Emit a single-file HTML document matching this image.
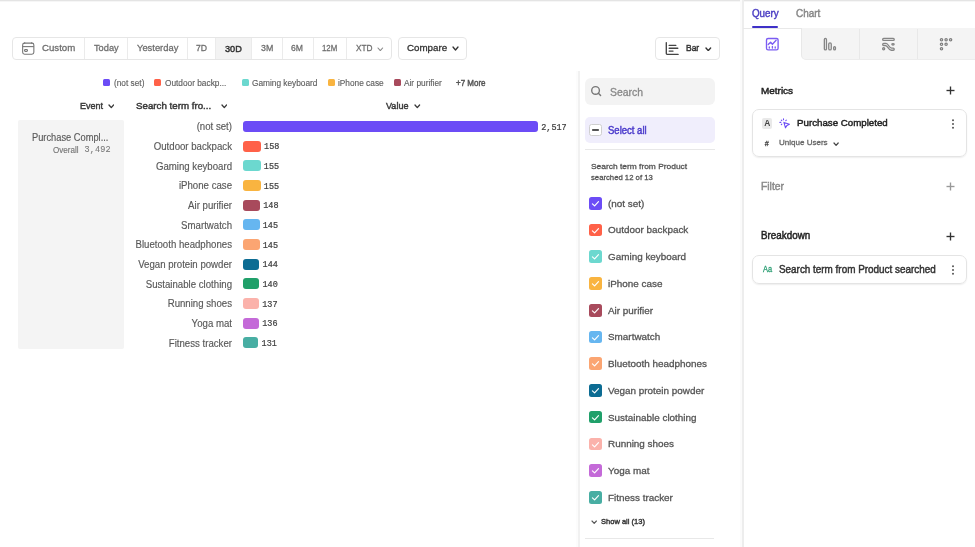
<!DOCTYPE html>
<html><head><meta charset="utf-8">
<style>
*{box-sizing:border-box;margin:0;padding:0}
html,body{width:975px;height:547px;overflow:hidden;background:#fff;font-family:"Liberation Sans",sans-serif;-webkit-font-smoothing:antialiased}
.wrap{position:absolute;left:0;top:0;width:975px;height:547px;will-change:transform}
.a{position:absolute;white-space:nowrap}
.m{-webkit-text-stroke:0.3px currentColor}
.m2{-webkit-text-stroke:0.45px currentColor}
.ms{-webkit-text-stroke:0.15px currentColor}
.mono{font-family:"Liberation Mono",monospace;position:absolute;white-space:nowrap}
</style></head><body>
<div class="wrap">
<div class="a" style="left:0px;top:0px;width:975px;height:1px;background:#e4e4e4"></div>
<div class="a" style="left:0px;top:1px;width:975px;height:1px;background:#f6f6f6"></div>
<div class="a" style="left:12px;top:37px;width:380px;height:23px;border:1px solid #e6e6e6;border-radius:4px"></div>
<div class="a" style="left:216px;top:38px;width:35px;height:21px;background:#f3f3f3"></div>
<div class="a" style="left:84px;top:38px;width:1px;height:21px;background:#ebebeb"></div>
<div class="a" style="left:127px;top:38px;width:1px;height:21px;background:#ebebeb"></div>
<div class="a" style="left:187px;top:38px;width:1px;height:21px;background:#ebebeb"></div>
<div class="a" style="left:215px;top:38px;width:1px;height:21px;background:#ebebeb"></div>
<div class="a" style="left:251px;top:38px;width:1px;height:21px;background:#ebebeb"></div>
<div class="a" style="left:282px;top:38px;width:1px;height:21px;background:#ebebeb"></div>
<div class="a" style="left:313px;top:38px;width:1px;height:21px;background:#ebebeb"></div>
<div class="a" style="left:346px;top:38px;width:1px;height:21px;background:#ebebeb"></div>
<svg class="a" style="left:21px;top:41px;" width="15" height="15" viewBox="0 0 15 15"><g fill="none" stroke="#777" stroke-width="1.1"><rect x="1.65" y="2.15" width="11.2" height="11.1" rx="1.9"/><line x1="1.65" y1="5.6" x2="12.85" y2="5.6"/><rect x="3.5" y="8.65" width="3" height="1.8" rx="0.9"/></g><g fill="#777"><circle cx="3.6" cy="2.1" r="0.75"/><circle cx="10.7" cy="2.1" r="0.75"/></g></svg>
<div class="a m" style="left:41.90px;top:42.38px;font-size:9.9px;line-height:12.38px;color:#6e6e6e;transform:scaleX(0.9765);transform-origin:0 0;">Custom</div>
<div class="a m" style="left:93.80px;top:42.38px;font-size:9.9px;line-height:12.38px;color:#6e6e6e;transform:scaleX(0.9356);transform-origin:0 0;">Today</div>
<div class="a m" style="left:136.60px;top:42.38px;font-size:9.9px;line-height:12.38px;color:#6e6e6e;transform:scaleX(0.9485);transform-origin:0 0;">Yesterday</div>
<div class="a m" style="left:195.70px;top:42.38px;font-size:9.9px;line-height:12.38px;color:#6e6e6e;transform:scaleX(0.8775);transform-origin:0 0;">7D</div>
<div class="a m2" style="left:225.00px;top:42.88px;font-size:9.8px;line-height:12.25px;color:#333;transform:scaleX(0.9333);transform-origin:0 0;">30D</div>
<div class="a m" style="left:260.70px;top:42.38px;font-size:9.9px;line-height:12.38px;color:#6e6e6e;transform:scaleX(0.8945);transform-origin:0 0;">3M</div>
<div class="a m" style="left:291.00px;top:42.38px;font-size:9.9px;line-height:12.38px;color:#6e6e6e;transform:scaleX(0.8727);transform-origin:0 0;">6M</div>
<div class="a m" style="left:321.70px;top:42.38px;font-size:9.9px;line-height:12.38px;color:#6e6e6e;transform:scaleX(0.7948);transform-origin:0 0;">12M</div>
<div class="a m" style="left:355.70px;top:42.38px;font-size:9.9px;line-height:12.38px;color:#6e6e6e;transform:scaleX(0.8384);transform-origin:0 0;">XTD</div>
<svg class="a" style="left:377.2px;top:46.8px;" width="6.6" height="4.6" viewBox="0 0 6.6 4.6"><path d="M1 1 L3.3 3.6 L5.6 1" fill="none" stroke="#888" stroke-width="1.1" stroke-linecap="round" stroke-linejoin="round"/></svg>
<div class="a" style="left:398px;top:37px;width:69px;height:23px;border:1px solid #e6e6e6;border-radius:4px"></div>
<div class="a m" style="left:407.00px;top:42.48px;font-size:9.7px;line-height:12.12px;color:#333;transform:scaleX(1.0075);transform-origin:0 0;">Compare</div>
<svg class="a" style="left:452px;top:46.4px;" width="7" height="5" viewBox="0 0 7 5"><path d="M1 1 L3.5 4 L6 1" fill="none" stroke="#333" stroke-width="1.3" stroke-linecap="round" stroke-linejoin="round"/></svg>
<div class="a" style="left:655px;top:37px;width:65px;height:23px;border:1px solid #e6e6e6;border-radius:4px"></div>
<svg class="a" style="left:664px;top:41px;" width="16" height="16" viewBox="0 0 16 16"><g fill="none" stroke="#444" stroke-width="1.35" stroke-linecap="round"><path d="M2.3 1.6 V12.6 Q2.3 13.4 3.1 13.4 H14.1"/><line x1="5.2" y1="4.4" x2="11.8" y2="4.4"/><line x1="5.2" y1="7.2" x2="13.8" y2="7.2"/><line x1="5.2" y1="10.1" x2="9" y2="10.1"/></g></svg>
<div class="a m2" style="left:685.80px;top:42.08px;font-size:9.8px;line-height:12.25px;color:#333;transform:scaleX(0.8656);transform-origin:0 0;">Bar</div>
<svg class="a" style="left:705px;top:46.8px;" width="6.6" height="4.6" viewBox="0 0 6.6 4.6"><path d="M1 1 L3.3 3.6 L5.6 1" fill="none" stroke="#333" stroke-width="1.4" stroke-linecap="round" stroke-linejoin="round"/></svg>
<div class="a" style="left:103px;top:79px;width:7px;height:7px;background:#6c4cf6;border-radius:1.5px"></div>
<div class="a ms" style="left:113.80px;top:77.86px;font-size:8.9px;line-height:11.12px;color:#606060;transform:scaleX(0.9342);transform-origin:0 0;">(not set)</div>
<div class="a" style="left:154px;top:79px;width:7px;height:7px;background:#ff6148;border-radius:1.5px"></div>
<div class="a ms" style="left:164.80px;top:77.86px;font-size:8.9px;line-height:11.12px;color:#606060;transform:scaleX(0.9342);transform-origin:0 0;">Outdoor backp...</div>
<div class="a" style="left:242px;top:79px;width:7px;height:7px;background:#6cd8cf;border-radius:1.5px"></div>
<div class="a ms" style="left:252.20px;top:77.86px;font-size:8.9px;line-height:11.12px;color:#606060;transform:scaleX(0.9342);transform-origin:0 0;">Gaming keyboard</div>
<div class="a" style="left:328px;top:79px;width:7px;height:7px;background:#f9b440;border-radius:1.5px"></div>
<div class="a ms" style="left:337.80px;top:77.86px;font-size:8.9px;line-height:11.12px;color:#606060;transform:scaleX(0.9342);transform-origin:0 0;">iPhone case</div>
<div class="a" style="left:394px;top:79px;width:7px;height:7px;background:#a84a5c;border-radius:1.5px"></div>
<div class="a ms" style="left:404.00px;top:77.86px;font-size:8.9px;line-height:11.12px;color:#606060;transform:scaleX(0.9342);transform-origin:0 0;">Air purifier</div>
<div class="a m2" style="left:456.30px;top:78.05px;font-size:8.7px;line-height:10.88px;color:#555;transform:scaleX(0.9207);transform-origin:0 0;">+7 More</div>
<div class="a m2" style="left:79.60px;top:99.88px;font-size:9.8px;line-height:12.25px;color:#383838;transform:scaleX(0.9182);transform-origin:0 0;">Event</div>
<svg class="a" style="left:107.9px;top:104.4px;" width="6.6" height="4.6" viewBox="0 0 6.6 4.6"><path d="M1 1 L3.3 3.6 L5.6 1" fill="none" stroke="#383838" stroke-width="1.3" stroke-linecap="round" stroke-linejoin="round"/></svg>
<div class="a m2" style="left:135.90px;top:99.88px;font-size:9.8px;line-height:12.25px;color:#383838;transform:scaleX(0.9934);transform-origin:0 0;">Search term fro...</div>
<svg class="a" style="left:220.5px;top:104.4px;" width="6.6" height="4.6" viewBox="0 0 6.6 4.6"><path d="M1 1 L3.3 3.6 L5.6 1" fill="none" stroke="#383838" stroke-width="1.3" stroke-linecap="round" stroke-linejoin="round"/></svg>
<div class="a m2" style="left:386.20px;top:99.88px;font-size:9.8px;line-height:12.25px;color:#383838;transform:scaleX(0.9240);transform-origin:0 0;">Value</div>
<svg class="a" style="left:414px;top:104.4px;" width="6.6" height="4.6" viewBox="0 0 6.6 4.6"><path d="M1 1 L3.3 3.6 L5.6 1" fill="none" stroke="#383838" stroke-width="1.3" stroke-linecap="round" stroke-linejoin="round"/></svg>
<div class="a" style="left:18px;top:119.5px;width:105.8px;height:229.9px;background:#f4f4f4;border-radius:2px"></div>
<div class="a ms" style="left:32.00px;top:131.59px;font-size:10px;line-height:12.5px;color:#5a5a5a;transform:scaleX(0.9289);transform-origin:0 0;">Purchase Compl...</div>
<div class="a ms" style="left:53.20px;top:145.83px;font-size:8.2px;line-height:10.25px;color:#777;transform:scaleX(0.9865);transform-origin:0 0;">Overall</div>
<div class="a mono" style="left:84.6px;top:146.3px;font-size:8.5px;line-height:9px;letter-spacing:0.15px;color:#7a7a7a;-webkit-text-stroke:0.1px #7a7a7a">3,492</div>
<div class="a ms" style="left:-168.12px;width:400px;text-align:right;top:121.48px;font-size:10px;line-height:12.5px;color:#585858;transform:scaleX(0.9640);transform-origin:100% 0;">(not set)</div>
<div class="a" style="left:243px;top:121.0px;width:295px;height:11px;background:#6c4cf6;border-radius:3px"></div>
<div class="a mono" style="left:541.20px;top:122.70px;font-size:8.5px;line-height:10px;color:#404040;-webkit-text-stroke:0.2px #404040">2,517</div>
<div class="a ms" style="left:-168.12px;width:400px;text-align:right;top:141.14px;font-size:10px;line-height:12.5px;color:#585858;transform:scaleX(0.9640);transform-origin:100% 0;">Outdoor backpack</div>
<div class="a" style="left:243px;top:140.66px;width:17.9px;height:11px;background:#ff6148;border-radius:3px"></div>
<div class="a mono" style="left:264.10px;top:142.36px;font-size:8.5px;line-height:10px;color:#404040;-webkit-text-stroke:0.2px #404040">158</div>
<div class="a ms" style="left:-168.12px;width:400px;text-align:right;top:160.80px;font-size:10px;line-height:12.5px;color:#585858;transform:scaleX(0.9640);transform-origin:100% 0;">Gaming keyboard</div>
<div class="a" style="left:243px;top:160.32px;width:17.6px;height:11px;background:#6cd8cf;border-radius:3px"></div>
<div class="a mono" style="left:263.80px;top:162.02px;font-size:8.5px;line-height:10px;color:#404040;-webkit-text-stroke:0.2px #404040">155</div>
<div class="a ms" style="left:-168.12px;width:400px;text-align:right;top:180.47px;font-size:10px;line-height:12.5px;color:#585858;transform:scaleX(0.9640);transform-origin:100% 0;">iPhone case</div>
<div class="a" style="left:243px;top:179.98px;width:17.6px;height:11px;background:#f9b440;border-radius:3px"></div>
<div class="a mono" style="left:263.80px;top:181.68px;font-size:8.5px;line-height:10px;color:#404040;-webkit-text-stroke:0.2px #404040">155</div>
<div class="a ms" style="left:-168.12px;width:400px;text-align:right;top:200.12px;font-size:10px;line-height:12.5px;color:#585858;transform:scaleX(0.9640);transform-origin:100% 0;">Air purifier</div>
<div class="a" style="left:243px;top:199.64px;width:17px;height:11px;background:#a84a5c;border-radius:3px"></div>
<div class="a mono" style="left:263.20px;top:201.34px;font-size:8.5px;line-height:10px;color:#404040;-webkit-text-stroke:0.2px #404040">148</div>
<div class="a ms" style="left:-168.12px;width:400px;text-align:right;top:219.78px;font-size:10px;line-height:12.5px;color:#585858;transform:scaleX(0.9640);transform-origin:100% 0;">Smartwatch</div>
<div class="a" style="left:243px;top:219.3px;width:16.5px;height:11px;background:#66b6f0;border-radius:3px"></div>
<div class="a mono" style="left:262.70px;top:221.00px;font-size:8.5px;line-height:10px;color:#404040;-webkit-text-stroke:0.2px #404040">145</div>
<div class="a ms" style="left:-168.12px;width:400px;text-align:right;top:239.44px;font-size:10px;line-height:12.5px;color:#585858;transform:scaleX(0.9640);transform-origin:100% 0;">Bluetooth headphones</div>
<div class="a" style="left:243px;top:238.96px;width:16.5px;height:11px;background:#fba572;border-radius:3px"></div>
<div class="a mono" style="left:262.70px;top:240.66px;font-size:8.5px;line-height:10px;color:#404040;-webkit-text-stroke:0.2px #404040">145</div>
<div class="a ms" style="left:-168.12px;width:400px;text-align:right;top:259.11px;font-size:10px;line-height:12.5px;color:#585858;transform:scaleX(0.9640);transform-origin:100% 0;">Vegan protein powder</div>
<div class="a" style="left:243px;top:258.62px;width:16.4px;height:11px;background:#0c6c93;border-radius:3px"></div>
<div class="a mono" style="left:262.60px;top:260.32px;font-size:8.5px;line-height:10px;color:#404040;-webkit-text-stroke:0.2px #404040">144</div>
<div class="a ms" style="left:-168.12px;width:400px;text-align:right;top:278.76px;font-size:10px;line-height:12.5px;color:#585858;transform:scaleX(0.9640);transform-origin:100% 0;">Sustainable clothing</div>
<div class="a" style="left:243px;top:278.28px;width:16.3px;height:11px;background:#20a06a;border-radius:3px"></div>
<div class="a mono" style="left:262.50px;top:279.98px;font-size:8.5px;line-height:10px;color:#404040;-webkit-text-stroke:0.2px #404040">140</div>
<div class="a ms" style="left:-168.12px;width:400px;text-align:right;top:298.43px;font-size:10px;line-height:12.5px;color:#585858;transform:scaleX(0.9640);transform-origin:100% 0;">Running shoes</div>
<div class="a" style="left:243px;top:297.94px;width:16px;height:11px;background:#fbb2ab;border-radius:3px"></div>
<div class="a mono" style="left:262.20px;top:299.64px;font-size:8.5px;line-height:10px;color:#404040;-webkit-text-stroke:0.2px #404040">137</div>
<div class="a ms" style="left:-168.12px;width:400px;text-align:right;top:318.09px;font-size:10px;line-height:12.5px;color:#585858;transform:scaleX(0.9640);transform-origin:100% 0;">Yoga mat</div>
<div class="a" style="left:243px;top:317.6px;width:16px;height:11px;background:#c46ad8;border-radius:3px"></div>
<div class="a mono" style="left:262.20px;top:319.30px;font-size:8.5px;line-height:10px;color:#404040;-webkit-text-stroke:0.2px #404040">136</div>
<div class="a ms" style="left:-168.12px;width:400px;text-align:right;top:337.75px;font-size:10px;line-height:12.5px;color:#585858;transform:scaleX(0.9640);transform-origin:100% 0;">Fitness tracker</div>
<div class="a" style="left:243px;top:337.26px;width:15.4px;height:11px;background:#48aea3;border-radius:3px"></div>
<div class="a mono" style="left:261.60px;top:338.96px;font-size:8.5px;line-height:10px;color:#404040;-webkit-text-stroke:0.2px #404040">131</div>
<div class="a" style="left:576px;top:71px;width:2px;height:476px;background:#fcfcfc"></div>
<div class="a" style="left:578px;top:71px;width:2px;height:476px;background:#f1f1f1"></div>
<div class="a" style="left:585px;top:77.6px;width:129.5px;height:27.8px;background:#f3f3f3;border-radius:6px"></div>
<svg class="a" style="left:589px;top:85px;" width="14" height="14" viewBox="0 0 14 14"><g fill="none" stroke="#777" stroke-width="1.4" stroke-linecap="round"><circle cx="6.55" cy="5.45" r="3.85"/><line x1="9.4" y1="8.3" x2="11.6" y2="10.6"/></g></svg>
<div class="a m" style="left:609.90px;top:85.50px;font-size:10.5px;line-height:13.12px;color:#888;transform:scaleX(0.9925);transform-origin:0 0;">Search</div>
<div class="a" style="left:585px;top:116.9px;width:129.5px;height:26px;background:#f0eefc;border-radius:5px"></div>
<div class="a" style="left:589.3px;top:123.8px;width:12.5px;height:12.7px;background:#fff;border:1px solid #cfcfcf;border-radius:2.5px"></div>
<div class="a" style="left:592.3px;top:129.4px;width:6.8px;height:1.6px;background:#555;border-radius:0.8px"></div>
<div class="a m2" style="left:607.70px;top:124.99px;font-size:10.2px;line-height:12.75px;color:#4b3bcb;transform:scaleX(0.9348);transform-origin:0 0;">Select all</div>
<div class="a" style="left:585px;top:149px;width:129.5px;height:1px;background:#e8e8e8"></div>
<div class="a m" style="left:590.90px;top:162.43px;font-size:8.1px;line-height:10.12px;color:#555;transform:scaleX(1.0372);transform-origin:0 0;">Search term from Product</div>
<div class="a m" style="left:590.90px;top:173.13px;font-size:8.1px;line-height:10.12px;color:#555;transform:scaleX(0.9530);transform-origin:0 0;">searched 12 of 13</div>
<div class="a" style="left:589px;top:197.0px;width:13px;height:12.6px;background:#6c4cf6;border-radius:2.5px"></div>
<svg class="a" style="left:589px;top:197.0px;" width="13" height="13" viewBox="0 0 13 13"><path d="M3.4 6.8 L5.6 8.9 L9.5 4.6" fill="none" stroke="#fff" stroke-width="1.15" stroke-linecap="round" stroke-linejoin="round"/></svg>
<div class="a m" style="left:607.60px;top:197.68px;font-size:9.8px;line-height:12.25px;color:#555;transform:scaleX(1.0101);transform-origin:0 0;">(not set)</div>
<div class="a" style="left:589px;top:223.73px;width:13px;height:12.6px;background:#ff6148;border-radius:2.5px"></div>
<svg class="a" style="left:589px;top:223.73px;" width="13" height="13" viewBox="0 0 13 13"><path d="M3.4 6.8 L5.6 8.9 L9.5 4.6" fill="none" stroke="#fff" stroke-width="1.15" stroke-linecap="round" stroke-linejoin="round"/></svg>
<div class="a m" style="left:607.60px;top:224.41px;font-size:9.8px;line-height:12.25px;color:#555;transform:scaleX(1.0101);transform-origin:0 0;">Outdoor backpack</div>
<div class="a" style="left:589px;top:250.46px;width:13px;height:12.6px;background:#6cd8cf;border-radius:2.5px"></div>
<svg class="a" style="left:589px;top:250.46px;" width="13" height="13" viewBox="0 0 13 13"><path d="M3.4 6.8 L5.6 8.9 L9.5 4.6" fill="none" stroke="#fff" stroke-width="1.15" stroke-linecap="round" stroke-linejoin="round"/></svg>
<div class="a m" style="left:607.60px;top:251.14px;font-size:9.8px;line-height:12.25px;color:#555;transform:scaleX(1.0101);transform-origin:0 0;">Gaming keyboard</div>
<div class="a" style="left:589px;top:277.19px;width:13px;height:12.6px;background:#f9b440;border-radius:2.5px"></div>
<svg class="a" style="left:589px;top:277.19px;" width="13" height="13" viewBox="0 0 13 13"><path d="M3.4 6.8 L5.6 8.9 L9.5 4.6" fill="none" stroke="#fff" stroke-width="1.15" stroke-linecap="round" stroke-linejoin="round"/></svg>
<div class="a m" style="left:607.60px;top:277.87px;font-size:9.8px;line-height:12.25px;color:#555;transform:scaleX(1.0101);transform-origin:0 0;">iPhone case</div>
<div class="a" style="left:589px;top:303.92px;width:13px;height:12.6px;background:#a84a5c;border-radius:2.5px"></div>
<svg class="a" style="left:589px;top:303.92px;" width="13" height="13" viewBox="0 0 13 13"><path d="M3.4 6.8 L5.6 8.9 L9.5 4.6" fill="none" stroke="#fff" stroke-width="1.15" stroke-linecap="round" stroke-linejoin="round"/></svg>
<div class="a m" style="left:607.60px;top:304.60px;font-size:9.8px;line-height:12.25px;color:#555;transform:scaleX(1.0101);transform-origin:0 0;">Air purifier</div>
<div class="a" style="left:589px;top:330.65px;width:13px;height:12.6px;background:#66b6f0;border-radius:2.5px"></div>
<svg class="a" style="left:589px;top:330.65px;" width="13" height="13" viewBox="0 0 13 13"><path d="M3.4 6.8 L5.6 8.9 L9.5 4.6" fill="none" stroke="#fff" stroke-width="1.15" stroke-linecap="round" stroke-linejoin="round"/></svg>
<div class="a m" style="left:607.60px;top:331.33px;font-size:9.8px;line-height:12.25px;color:#555;transform:scaleX(1.0101);transform-origin:0 0;">Smartwatch</div>
<div class="a" style="left:589px;top:357.38px;width:13px;height:12.6px;background:#fba572;border-radius:2.5px"></div>
<svg class="a" style="left:589px;top:357.38px;" width="13" height="13" viewBox="0 0 13 13"><path d="M3.4 6.8 L5.6 8.9 L9.5 4.6" fill="none" stroke="#fff" stroke-width="1.15" stroke-linecap="round" stroke-linejoin="round"/></svg>
<div class="a m" style="left:607.60px;top:358.06px;font-size:9.8px;line-height:12.25px;color:#555;transform:scaleX(1.0101);transform-origin:0 0;">Bluetooth headphones</div>
<div class="a" style="left:589px;top:384.11px;width:13px;height:12.6px;background:#0c6c93;border-radius:2.5px"></div>
<svg class="a" style="left:589px;top:384.11px;" width="13" height="13" viewBox="0 0 13 13"><path d="M3.4 6.8 L5.6 8.9 L9.5 4.6" fill="none" stroke="#fff" stroke-width="1.15" stroke-linecap="round" stroke-linejoin="round"/></svg>
<div class="a m" style="left:607.60px;top:384.79px;font-size:9.8px;line-height:12.25px;color:#555;transform:scaleX(1.0101);transform-origin:0 0;">Vegan protein powder</div>
<div class="a" style="left:589px;top:410.84px;width:13px;height:12.6px;background:#20a06a;border-radius:2.5px"></div>
<svg class="a" style="left:589px;top:410.84px;" width="13" height="13" viewBox="0 0 13 13"><path d="M3.4 6.8 L5.6 8.9 L9.5 4.6" fill="none" stroke="#fff" stroke-width="1.15" stroke-linecap="round" stroke-linejoin="round"/></svg>
<div class="a m" style="left:607.60px;top:411.52px;font-size:9.8px;line-height:12.25px;color:#555;transform:scaleX(1.0101);transform-origin:0 0;">Sustainable clothing</div>
<div class="a" style="left:589px;top:437.57px;width:13px;height:12.6px;background:#fbb2ab;border-radius:2.5px"></div>
<svg class="a" style="left:589px;top:437.57px;" width="13" height="13" viewBox="0 0 13 13"><path d="M3.4 6.8 L5.6 8.9 L9.5 4.6" fill="none" stroke="#fff" stroke-width="1.15" stroke-linecap="round" stroke-linejoin="round"/></svg>
<div class="a m" style="left:607.60px;top:438.25px;font-size:9.8px;line-height:12.25px;color:#555;transform:scaleX(1.0101);transform-origin:0 0;">Running shoes</div>
<div class="a" style="left:589px;top:464.3px;width:13px;height:12.6px;background:#c46ad8;border-radius:2.5px"></div>
<svg class="a" style="left:589px;top:464.3px;" width="13" height="13" viewBox="0 0 13 13"><path d="M3.4 6.8 L5.6 8.9 L9.5 4.6" fill="none" stroke="#fff" stroke-width="1.15" stroke-linecap="round" stroke-linejoin="round"/></svg>
<div class="a m" style="left:607.60px;top:464.98px;font-size:9.8px;line-height:12.25px;color:#555;transform:scaleX(1.0101);transform-origin:0 0;">Yoga mat</div>
<div class="a" style="left:589px;top:491.03px;width:13px;height:12.6px;background:#48aea3;border-radius:2.5px"></div>
<svg class="a" style="left:589px;top:491.03px;" width="13" height="13" viewBox="0 0 13 13"><path d="M3.4 6.8 L5.6 8.9 L9.5 4.6" fill="none" stroke="#fff" stroke-width="1.15" stroke-linecap="round" stroke-linejoin="round"/></svg>
<div class="a m" style="left:607.60px;top:491.71px;font-size:9.8px;line-height:12.25px;color:#555;transform:scaleX(1.0101);transform-origin:0 0;">Fitness tracker</div>
<svg class="a" style="left:591.4px;top:520.1px;" width="6.4" height="4.3" viewBox="0 0 6.4 4.3"><path d="M1 1 L3.2 3.3 L5.4 1" fill="none" stroke="#555" stroke-width="1.15" stroke-linecap="round" stroke-linejoin="round"/></svg>
<div class="a m2" style="left:601.40px;top:517.32px;font-size:7.9px;line-height:9.88px;color:#3a3a3a;transform:scaleX(0.9544);transform-origin:0 0;">Show all (13)</div>
<div class="a" style="left:585px;top:538px;width:129px;height:1px;background:#e8e8e8"></div>
<div class="a" style="left:740px;top:0px;width:2px;height:547px;background:#fbfbfb"></div>
<div class="a" style="left:742px;top:0px;width:2px;height:547px;background:#ededed"></div>
<div class="a m2" style="left:751.90px;top:7.89px;font-size:10.1px;line-height:12.62px;color:#4c3fc4;transform:scaleX(0.9709);transform-origin:0 0;">Query</div>
<div class="a m2" style="left:796.00px;top:7.89px;font-size:10.1px;line-height:12.62px;color:#888;transform:scaleX(0.9838);transform-origin:0 0;">Chart</div>
<div class="a" style="left:751.9px;top:26px;width:26.5px;height:2px;background:#3f31c8;border-radius:1px"></div>
<div class="a" style="left:743px;top:28px;width:232px;height:1px;background:#e8e8e8"></div>
<div class="a" style="left:801px;top:28px;width:174px;height:31.5px;background:#f4f4f4;border-left:1px solid #e8e8e8;border-bottom:1px solid #ececec;border-radius:0 0 0 5px"></div>
<div class="a" style="left:859px;top:29px;width:1px;height:30px;background:#e8e8e8"></div>
<div class="a" style="left:917px;top:29px;width:1px;height:30px;background:#e8e8e8"></div>
<svg class="a" style="left:765px;top:37px;" width="15" height="15" viewBox="0 0 15 15"><g fill="none" stroke="#7b5cf2" stroke-width="1.35" stroke-linecap="round" stroke-linejoin="round"><rect x="1.5" y="1.5" width="11.6" height="11.4" rx="1.6"/><path d="M3.2 7.6 L5.6 5.2 L7.4 7.3 L11.1 3.2"/><path d="M4.3 9.8 V11 M7.4 9.4 V11 M10.2 9.8 V11"/></g></svg>
<svg class="a" style="left:822px;top:37px;" width="16" height="15" viewBox="0 0 16 15"><g fill="none" stroke="#858585" stroke-width="1.3"><rect x="2.35" y="1.45" width="2.1" height="11.5" rx="1.05"/><rect x="6.75" y="5.85" width="2.5" height="7.1" rx="1.25"/><rect x="11.65" y="9.55" width="1.8" height="3.4" rx="0.9"/></g></svg>
<svg class="a" style="left:880px;top:37px;" width="17" height="15" viewBox="0 0 17 15"><g fill="none" stroke="#858585" stroke-width="1.3" stroke-linejoin="round"><rect x="2.65" y="1.45" width="11.6" height="2" rx="1"/><path d="M3.7 6.4 H6 C8.6 6.4 8.9 11.15 11.6 11.15 H13.2 A1.05 1.05 0 0 1 13.2 13.25 H11.2 C8.2 13.25 7.9 8.5 5.4 8.5 H3.7 A1.05 1.05 0 0 1 3.7 6.4 Z"/><ellipse cx="13" cy="7.35" rx="1.15" ry="0.8"/><circle cx="3.65" cy="11.8" r="1.05"/></g></svg>
<svg class="a" style="left:938px;top:37px;" width="16" height="15" viewBox="0 0 16 15"><g fill="none" stroke="#7e7e7e" stroke-width="1.25"><circle cx="3.5" cy="2.7" r="1.15"/><circle cx="8.1" cy="2.7" r="1.15"/><circle cx="12.6" cy="2.7" r="1.15"/><circle cx="3.5" cy="7.2" r="1.15"/><circle cx="8.1" cy="7.2" r="1.15"/><circle cx="3.5" cy="11.8" r="1.15"/></g></svg>
<div class="a m2" style="left:760.60px;top:85.08px;font-size:9.8px;line-height:12.25px;color:#222;transform:scaleX(1.0158);transform-origin:0 0;">Metrics</div>
<svg class="a" style="left:944px;top:84px;" width="13" height="13" viewBox="0 0 13 13"><g stroke="#333" stroke-width="1.35"><line x1="2.5" y1="6.5" x2="10.5" y2="6.5"/><line x1="6.5" y1="2.5" x2="6.5" y2="10.5"/></g></svg>
<div class="a" style="left:752px;top:109px;width:215px;height:47.5px;border:1px solid #e4e4e4;border-radius:7px;box-shadow:0 1px 1.5px rgba(0,0,0,.07)"></div>
<div class="a" style="left:762.2px;top:118.2px;width:10.3px;height:10.6px;background:#e9e9e9;border-radius:2px;font-size:8.4px;line-height:10.8px;text-align:center;color:#444;font-weight:bold">A</div>
<svg class="a" style="left:779px;top:118px;" width="12" height="12" viewBox="0 0 12 12"><g fill="none" stroke="#6b4cf5" stroke-width="1.1" stroke-linecap="round" stroke-linejoin="round"><path d="M4.9 4.4 L10.4 6.3 L8 7.4 L6.5 9.8 Z"/><path d="M4.5 0.9 V1.7 M2.3 2.1 L2.8 2.6 M7.3 2.1 L6.8 2.6 M0.9 4.4 H1.8 M2.3 6.7 L2.8 6.2"/></g></svg>
<div class="a m2" style="left:797.20px;top:117.48px;font-size:9.9px;line-height:12.38px;color:#222;transform:scaleX(0.9843);transform-origin:0 0;">Purchase Completed</div>
<div class="a m" style="left:764.70px;top:139.31px;font-size:7.3px;line-height:9.12px;color:#444;">#</div>
<div class="a m" style="left:778.80px;top:137.93px;font-size:8px;line-height:10.0px;color:#666;transform:scaleX(1.0031);transform-origin:0 0;">Unique Users</div>
<svg class="a" style="left:833px;top:141.6px;" width="6.2" height="4.4" viewBox="0 0 6.2 4.4"><path d="M1 1 L3.1 3.4 L5.2 1" fill="none" stroke="#444" stroke-width="1.2" stroke-linecap="round" stroke-linejoin="round"/></svg>
<svg class="a" style="left:949.9px;top:118.1px;" width="6" height="12" viewBox="0 0 6 12"><g fill="#555"><circle cx="3" cy="2.2" r="1"/><circle cx="3" cy="6" r="1"/><circle cx="3" cy="9.8" r="1"/></g></svg>
<div class="a m2" style="left:760.50px;top:181.09px;font-size:10.2px;line-height:12.75px;color:#8a8a8a;transform:scaleX(1.0155);transform-origin:0 0;">Filter</div>
<svg class="a" style="left:944px;top:180px;" width="13" height="13" viewBox="0 0 13 13"><g stroke="#999" stroke-width="1.35"><line x1="2.5" y1="6.5" x2="10.5" y2="6.5"/><line x1="6.5" y1="2.5" x2="6.5" y2="10.5"/></g></svg>
<div class="a m2" style="left:760.50px;top:230.19px;font-size:10.2px;line-height:12.75px;color:#222;transform:scaleX(0.9657);transform-origin:0 0;">Breakdown</div>
<svg class="a" style="left:944px;top:230px;" width="13" height="13" viewBox="0 0 13 13"><g stroke="#333" stroke-width="1.35"><line x1="2.5" y1="6.5" x2="10.5" y2="6.5"/><line x1="6.5" y1="2.5" x2="6.5" y2="10.5"/></g></svg>
<div class="a" style="left:752px;top:254.5px;width:214.5px;height:29.2px;border:1px solid #e4e4e4;border-radius:7px;box-shadow:0 1px 1.5px rgba(0,0,0,.07)"></div>
<div class="a m" style="left:762.70px;top:264.15px;font-size:8.6px;line-height:10.75px;color:#2a9d72;transform:scaleX(0.8626);transform-origin:0 0;">Aa</div>
<div class="a m2" style="left:778.70px;top:262.90px;font-size:10.4px;line-height:13.0px;color:#333;transform:scaleX(0.9517);transform-origin:0 0;">Search term from Product searched</div>
<svg class="a" style="left:949.6px;top:264px;" width="6" height="12" viewBox="0 0 6 12"><g fill="#555"><circle cx="3" cy="2.2" r="1"/><circle cx="3" cy="6" r="1"/><circle cx="3" cy="9.8" r="1"/></g></svg>
</div>
</body></html>
